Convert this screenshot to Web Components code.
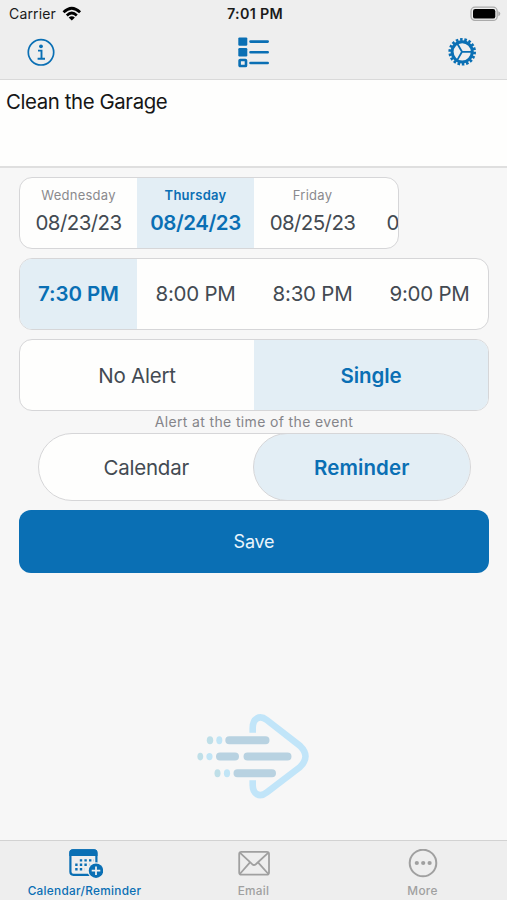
<!DOCTYPE html>
<html lang="en">
<head>
<meta charset="utf-8">
<title>Reminder</title>
<style>
  html, body {
    margin: 0;
    height: 100%;
  }
  body {
    font-family: Inter, "Liberation Sans", sans-serif;
    overflow: hidden;
  }
</style>
</head>
<body>
<reminder-app>
  <status-bar carrier="Carrier" time="7:01 PM"></status-bar>
  <nav-bar></nav-bar>
  <task-note>Clean the Garage</task-note>
  <main-form>
    <segment-group class="dates">
      <segment-item label="Wednesday">08/23/23</segment-item>
      <segment-item label="Thursday" selected>08/24/23</segment-item>
      <segment-item label="Friday">08/25/23</segment-item>
      <segment-item label="Saturday">08/26/23</segment-item>
    </segment-group>
    <segment-group class="times">
      <segment-item selected>7:30 PM</segment-item>
      <segment-item>8:00 PM</segment-item>
      <segment-item>8:30 PM</segment-item>
      <segment-item>9:00 PM</segment-item>
    </segment-group>
    <segment-group class="alerts">
      <segment-item>No Alert</segment-item>
      <segment-item selected>Single</segment-item>
    </segment-group>
    <hint-text>Alert at the time of the event</hint-text>
    <segment-group class="kinds" pill>
      <segment-item>Calendar</segment-item>
      <segment-item selected>Reminder</segment-item>
    </segment-group>
    <save-button>Save</save-button>
    <arrow-logo></arrow-logo>
  </main-form>
  <tab-bar>
    <tab-item active>
      <svg slot="icon" width="36" height="30" viewBox="-1 0 36 30">
        <rect x="2.4" y="1.4" width="26" height="24.4" rx="3" fill="none" stroke="currentColor" stroke-width="2.2"/>
        <path d="M1.3 7V4A3.6 3.6 0 0 1 4.9.3H26A3.6 3.6 0 0 1 29.5 4V7Z" fill="currentColor"/>
        <path d="M11.8 11.4h14M7.2 15.8h14M7.2 20.2h9.3" fill="none" stroke="currentColor" stroke-width="2.4" stroke-dasharray="2.4 2.2"/>
        <circle cx="28" cy="21.7" r="8.4" fill="#eee"/>
        <circle cx="28" cy="21.7" r="7.2" fill="currentColor"/>
        <path d="M28 17.4v8.6M23.7 21.7h8.6" stroke="#eee" stroke-width="1.8"/>
      </svg>
      Calendar/Reminder
    </tab-item>
    <tab-item>
      <svg slot="icon" width="36" height="30" viewBox="0 0 36 30" fill="none" stroke="currentColor" stroke-width="1.8">
        <rect x="3.2" y="2.9" width="29.8" height="22.8" rx="2.2"/>
        <path d="M3.8 3.6 16.2 15.2Q18 16.7 19.8 15.2L32.4 3.6M3.8 25 14 13.4M32.4 25 22 13.4"/>
      </svg>
      Email
    </tab-item>
    <tab-item>
      <svg slot="icon" width="36" height="30" viewBox="0 0 36 30">
        <circle cx="18" cy="14" r="13.3" fill="none" stroke="currentColor" stroke-width="2"/>
        <g fill="currentColor">
          <circle cx="11.8" cy="14" r="2.1"/>
          <circle cx="18.2" cy="14" r="2.1"/>
          <circle cx="24.6" cy="14" r="2.1"/>
        </g>
      </svg>
      More
    </tab-item>
  </tab-bar>
</reminder-app>

<script>
// attach an open shadow root filled from the given markup
class BaseElement extends HTMLElement {
  constructor() {
    super();
    const template = document.createElement('template');
    template.innerHTML = this.constructor.markup;
    this.attachShadow({ mode: 'open' });
    this.shadowRoot.appendChild(template.content.cloneNode(true));
  }
}

class ReminderApp extends BaseElement {
  static markup = `
    <style>
      :host {
        --blue: #0a6fb4;
        --tint: #e3eef5;
        --line: #d6d6d8;
        display: flex;
        flex-direction: column;
        width: 507px;
        height: 900px;
        background: #f7f7f7;
        color: #434a52;
      }
    </style>
    <slot></slot>
  `;
}

class StatusBar extends BaseElement {
  static markup = `
    <style>
      :host {
        display: grid;
        grid-template-columns: 1fr auto 1fr;
        align-items: center;
        height: 28px;
        box-sizing: border-box;
        padding: 0 6px 1px 9px;
        background: #eee;
        color: #1a1a1a;
        font-size: 14px;
      }
      .left {
        display: flex;
        align-items: center;
        gap: 6px;
      }
      .carrier {
        letter-spacing: .15px;
      }
      .time {
        font-size: 14.3px;
        font-weight: 600;
        letter-spacing: .3px;
      }
      .battery {
        justify-self: end;
      }
      svg {
        display: block;
      }
    </style>
    <div class="left">
      <span class="carrier"></span>
      <svg width="20" height="16" viewBox="0 0 20 16" fill="none" stroke="#000" stroke-width="2.7">
        <path d="M1.5 6.3Q9.8-1.9 18.1 6.3M4.8 9.5Q9.8 4.6 14.8 9.5"/>
        <path d="M6.7 11.5Q9.8 8.8 12.9 11.5L9.8 14.6Z" fill="#000" stroke="none"/>
      </svg>
    </div>
    <span class="time"></span>
    <svg class="battery" width="31" height="16" viewBox="0 0 31 16">
      <rect x="1" y="1.2" width="26.2" height="13.2" rx="4" fill="none" stroke="#aaa" stroke-width="1.3"/>
      <rect x="3" y="3.1" width="22.3" height="9.5" rx="2.2" fill="#000"/>
      <path d="M28.3 5.3Q30.3 6 30.3 7.8T28.3 10.3Z" fill="#aaa"/>
    </svg>
  `;

  connectedCallback() {
    this.shadowRoot.querySelector('.carrier').textContent = this.getAttribute('carrier');
    this.shadowRoot.querySelector('.time').textContent = this.getAttribute('time');
  }
}

class NavBar extends BaseElement {
  static markup = `
    <style>
      :host {
        display: flex;
        justify-content: space-between;
        align-items: flex-start;
        height: 52px;
        box-sizing: border-box;
        padding: 8px 29px 0 25px;
        border-bottom: 1px solid #d9d9d9;
        background: #eee;
        color: var(--blue);
      }
    </style>
    <svg width="32" height="32" viewBox="0 0 32 32" fill="none" stroke="currentColor">
      <circle cx="16" cy="16.3" r="12.7" stroke-width="1.7"/>
      <path d="M13 14.6h3.5v8M12.6 22.8h7.4" stroke-width="1.9"/>
      <circle cx="16" cy="10.3" r="1.9" fill="currentColor" stroke="none"/>
    </svg>
    <svg width="34" height="32" viewBox="-1.3 0 34 32" fill="none" stroke="currentColor">
      <rect x="2" y="1.4" width="9" height="8.4" rx="1.2" fill="currentColor" stroke="none"/>
      <rect x="2" y="12" width="9" height="8.4" rx="1.2" fill="currentColor" stroke="none"/>
      <rect x="3.3" y="24" width="6.4" height="6" rx=".6" stroke-width="2.6"/>
      <path d="M14.2 5.6h17.2M14.2 16.3h17.2M14.2 27h17.2" stroke-width="2.6" stroke-linecap="round"/>
    </svg>
    <svg width="32" height="32" viewBox="0 0 32 32" fill="none" stroke="currentColor">
      <circle cx="16.2" cy="15.8" r="12.4" stroke-width="2.8" stroke-dasharray="2.6 1.8" pathLength="79.2"/>
      <circle cx="16.2" cy="15.8" r="10.1" stroke-width="3"/>
      <path d="M16 15.8h9.5M16 15.8 11.2 7.5M16 15.8 11.2 24.1" stroke-width="1.8"/>
    </svg>
  `;
}

class TaskNote extends BaseElement {
  static markup = `
    <style>
      :host {
        display: block;
        height: 88px;
        box-sizing: border-box;
        padding: 9px 6px;
        border-bottom: 2px solid #dfdfdf;
        background: #fefefd;
        color: #161616;
        font-size: 20.4px;
        letter-spacing: -.4px;
        line-height: 26px;
      }
    </style>
    <slot></slot>
  `;
}

class MainForm extends BaseElement {
  static markup = `
    <style>
      :host {
        display: flex;
        flex: 1;
        flex-direction: column;
        padding: 9px 18px 0 19px;
      }
      ::slotted(.dates) {
        width: 380px;
        margin-bottom: 9px;
      }
      ::slotted(.times) {
        margin-bottom: 9px;
      }
      ::slotted(.kinds) {
        margin: 0 18.5px 9px;
      }
    </style>
    <slot></slot>
  `;
}

class SegmentGroup extends BaseElement {
  static markup = `
    <style>
      :host {
        display: flex;
        height: 72px;
        box-sizing: border-box;
        border: 1.5px solid var(--line);
        border-radius: 13px;
        background: #fefefd;
        letter-spacing: -.25px;
        overflow: hidden;
      }
      :host([pill]) {
        height: 68px;
        border-radius: 34px;
      }
      :host(.dates) {
        letter-spacing: -.6px;
      }
      :host(.dates) ::slotted(*) {
        flex: 0 0 117px;
        box-sizing: border-box;
        padding-bottom: 3px;
      }
      :host(.alerts) ::slotted(*),
      :host(.kinds) ::slotted(*) {
        padding-top: 1.5px;
      }
    </style>
    <slot></slot>
  `;
}

class SegmentItem extends BaseElement {
  static markup = `
    <style>
      :host {
        display: flex;
        flex: 1;
        flex-direction: column;
        align-items: center;
        justify-content: center;
        font-size: 20.5px;
        line-height: 28px;
        white-space: nowrap;
      }
      :host([selected]) {
        background: var(--tint);
        color: var(--blue);
        font-weight: 600;
        letter-spacing: -.1px;
      }
      :host([selected][data-pill]) {
        margin: -1px;
        border: 1px solid var(--line);
        border-radius: 34px;
        letter-spacing: .1px;
      }
      :host([selected][label]) {
        letter-spacing: -.45px;
      }
      .label {
        color: #8a8a8e;
        font-size: 13px;
        line-height: 18px;
        letter-spacing: .25px;
        margin-bottom: 5px;
      }
      .label:empty {
        display: none;
      }
      :host([selected]) .label {
        color: inherit;
      }
    </style>
    <span class="label"></span>
    <span><slot></slot></span>
  `;

  connectedCallback() {
    this.shadowRoot.querySelector('.label').textContent = this.getAttribute('label') || '';
    this.toggleAttribute('data-pill', this.parentElement.hasAttribute('pill'));
  }
}

class HintText extends BaseElement {
  static markup = `
    <style>
      :host {
        display: block;
        height: 22px;
        color: #85858a;
        font-size: 14px;
        line-height: 22px;
        letter-spacing: .36px;
        text-align: center;
      }
    </style>
    <slot></slot>
  `;
}

class SaveButton extends BaseElement {
  static markup = `
    <style>
      :host {
        display: block;
      }
      button {
        display: block;
        width: 100%;
        height: 63px;
        padding: 0;
        border: 0;
        border-radius: 12px;
        background: var(--blue);
        color: #e9f4fb;
        font: 18px/64px Inter, "Liberation Sans", sans-serif;
        letter-spacing: -.2px;
      }
    </style>
    <button type="button"><slot></slot></button>
  `;
}

class ArrowLogo extends BaseElement {
  static markup = `
    <style>
      :host {
        display: flex;
        justify-content: center;
        margin-top: 137px;
      }
    </style>
    <svg width="120" height="95" viewBox="0 0 120 95">
      <path d="M58.7 22.7V18C58.7 8.5 65.5 4.3 72.8 10L106 35.8Q117 46.3 106 57L72.8 82.4C65.5 88.2 58.7 84 58.7 75V70.3" fill="none" stroke="#c1e5f9" stroke-width="6.6"/>
      <g stroke="#b8d2e1" stroke-width="8" stroke-linecap="round">
        <path d="M35.3 30.2H71.5M26 46.6H41M53.5 46.6H93.5M43.5 63.2H78"/>
      </g>
      <g fill="#bfdfe8">
        <ellipse cx="16" cy="30.2" rx="3.2" ry="4"/>
        <ellipse cx="6.3" cy="46.6" rx="2.9" ry="3.8"/>
        <ellipse cx="23.5" cy="63.2" rx="3" ry="4"/>
      </g>
      <g fill="#c1e5f6">
        <ellipse cx="25.3" cy="30.2" rx="3" ry="4"/>
        <ellipse cx="15.5" cy="46.6" rx="3.1" ry="3.6"/>
        <ellipse cx="33" cy="63.2" rx="3.1" ry="4"/>
      </g>
    </svg>
  `;
}

class TabBar extends BaseElement {
  static markup = `
    <style>
      :host {
        display: flex;
        height: 60px;
        box-sizing: border-box;
        border-top: 1px solid #d2d2d2;
        background: #eee;
      }
    </style>
    <slot></slot>
  `;
}

class TabItem extends BaseElement {
  static markup = `
    <style>
      :host {
        display: flex;
        flex: 1;
        flex-direction: column;
        align-items: center;
        padding-top: 8px;
        color: #a0a0a0;
        font-size: 11.8px;
        font-weight: 500;
        line-height: 16px;
        letter-spacing: .3px;
      }
      :host([active]) {
        color: var(--blue);
      }
      .text {
        margin-top: 4px;
      }
    </style>
    <slot name="icon"></slot>
    <span class="text"><slot></slot></span>
  `;
}

customElements.define('reminder-app', ReminderApp);
customElements.define('status-bar', StatusBar);
customElements.define('nav-bar', NavBar);
customElements.define('task-note', TaskNote);
customElements.define('main-form', MainForm);
customElements.define('segment-group', SegmentGroup);
customElements.define('segment-item', SegmentItem);
customElements.define('hint-text', HintText);
customElements.define('save-button', SaveButton);
customElements.define('arrow-logo', ArrowLogo);
customElements.define('tab-bar', TabBar);
customElements.define('tab-item', TabItem);
</script>
</body>
</html>
